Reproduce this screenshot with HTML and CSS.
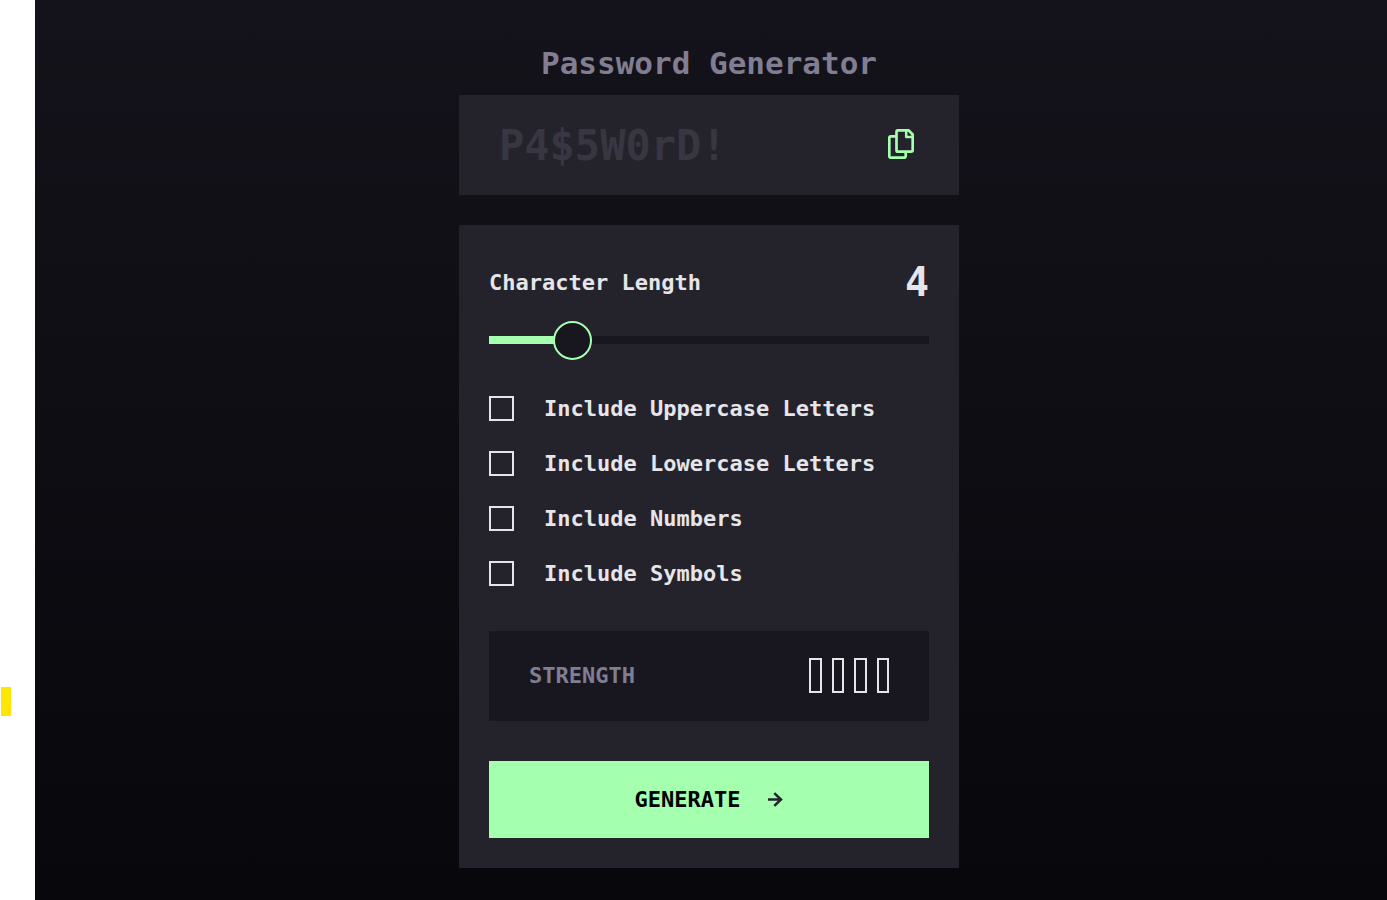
FILE: index.html
```html
<!DOCTYPE html>
<html lang="en">
<head>
<meta charset="utf-8">
<meta name="viewport" content="width=device-width, initial-scale=1">
<title>Password Generator</title>
<link rel="stylesheet" href="styles.css">
</head>
<body>
<aside class="rail"><span class="rail-mark"></span></aside>
<main class="page">
  <div class="generator">
    <h1 class="title">Password Generator</h1>
    <div class="password">
      <input class="password-field" type="text" placeholder="P4$5W0rD!" aria-label="Password" readonly>
      <button class="copy" type="button" aria-label="Copy password">
        <svg width="26" height="30" viewBox="0 0 26 30" fill="none" stroke="currentColor" stroke-width="2.7" stroke-linejoin="round">
          <path d="M8 7.3H2.8a1.5 1.5 0 0 0-1.5 1.5v18.4a1.5 1.5 0 0 0 1.5 1.5h13.4a1.5 1.5 0 0 0 1.5-1.5V23.5"/>
          <path d="M10 1.3h10.5l4.2 4.2v15.7a1.5 1.5 0 0 1-1.5 1.5H10a1.5 1.5 0 0 1-1.5-1.5V2.8A1.5 1.5 0 0 1 10 1.3z"/>
          <path d="M18.2 1.3v6.6h6.5" stroke-width="2.5"/>
        </svg>
      </button>
    </div>
    <form class="card">
      <div class="length">
        <label for="length">Character Length</label>
        <output class="length-value" for="length">4</output>
      </div>
      <input class="slider" id="length" type="range" min="0" max="25" value="4" style="--fill: 16%">
      <div class="options">
        <label class="option"><input class="check" type="checkbox">Include Uppercase Letters</label>
        <label class="option"><input class="check" type="checkbox">Include Lowercase Letters</label>
        <label class="option"><input class="check" type="checkbox">Include Numbers</label>
        <label class="option"><input class="check" type="checkbox">Include Symbols</label>
      </div>
      <div class="strength">
        <span>STRENGTH</span>
        <div class="bars"><i class="bar"></i><i class="bar"></i><i class="bar"></i><i class="bar"></i></div>
      </div>
      <button class="generate" type="button">
        GENERATE
        <svg width="15" height="16" viewBox="0 0 15 16" fill="none" stroke="currentColor" stroke-width="2.5">
          <path d="M0 7.5h13M6.3 1.2 13 7.5 6.3 13.8"/>
        </svg>
      </button>
    </form>
  </div>
</main>
</body>
</html>
```
FILE: styles.css
```css
* {
  box-sizing: border-box;
}

body {
  display: flex;
  min-height: 100vh;
  margin: 0;
  background: #fff;
  color: #e6e5ea;
  font: bold 22px/25px "DejaVu Sans Mono", monospace;
}

input,
button {
  margin: 0;
  padding: 0;
  border: 0;
  border-radius: 0;
  font: inherit;
}

.rail {
  display: flex;
  flex: 0 0 35px;
  align-items: flex-end;
  padding: 0 0 184px 1px;
}

.rail-mark {
  width: 10px;
  height: 29px;
  background: #ffe600;
}

.page {
  display: flex;
  flex: 1;
  justify-content: center;
  padding: 43px 4px 32px 0;
  background: linear-gradient(#14131b, #08070b);
}

.generator {
  width: 100%;
  max-width: 500px;
}

.title {
  margin: 0 0 12px;
  color: #817d92;
  font-size: 31px;
  line-height: 40px;
  text-align: center;
}

.password {
  display: flex;
  align-items: center;
  height: 100px;
  margin-bottom: 30px;
  padding: 0 45px 2px 40px;
  background: #24232c;
}

.password-field {
  flex: 1;
  min-width: 0;
  padding-top: 4px;
  background: none;
  color: #e6e5ea;
  font-size: 42px;
  line-height: 56px;
}

.password-field::placeholder {
  color: #383641;
  opacity: 1;
}

.copy {
  display: flex;
  background: none;
  color: #a4ffaf;
}

.card {
  display: flex;
  flex-direction: column;
  padding: 30px;
  background: #24232c;
}

.length {
  display: flex;
  align-items: center;
  justify-content: space-between;
}

.length-value {
  font-size: 40px;
  line-height: 54px;
}

.slider {
  width: 100%;
  height: 39px;
  margin: 11px 0 37px;
  appearance: none;
  background: none;
}

.slider::-webkit-slider-runnable-track {
  height: 8px;
  background: linear-gradient(90deg, #a4ffaf var(--fill), #18171f var(--fill));
}

.slider::-webkit-slider-thumb {
  width: 39px;
  height: 39px;
  margin-top: -15px;
  border: 2px solid #a4ffaf;
  border-radius: 50%;
  appearance: none;
  background: #18171f;
}

.options {
  display: grid;
  gap: 30px;
}

.option {
  display: flex;
  align-items: center;
  gap: 30px;
}

.check {
  width: 25px;
  height: 25px;
  border: 2px solid #e6e5ea;
  appearance: none;
}

.check:checked {
  border-color: #a4ffaf;
  background: #a4ffaf;
}

.strength {
  display: flex;
  align-items: center;
  justify-content: space-between;
  height: 90px;
  margin: 45px 0 40px;
  padding: 0 40px 1px;
  background: #18171f;
  color: #817d92;
}

.bars {
  display: flex;
  gap: 10px;
  width: 80px;
  height: 35px;
}

.bar {
  flex: 1;
  border: 2px solid #e6e5ea;
}

.generate {
  display: flex;
  align-items: center;
  justify-content: center;
  gap: 28px;
  height: 77px;
  background: #a4ffaf;
  color: #000;
}

.generate svg {
  color: #24232c;
}
```
